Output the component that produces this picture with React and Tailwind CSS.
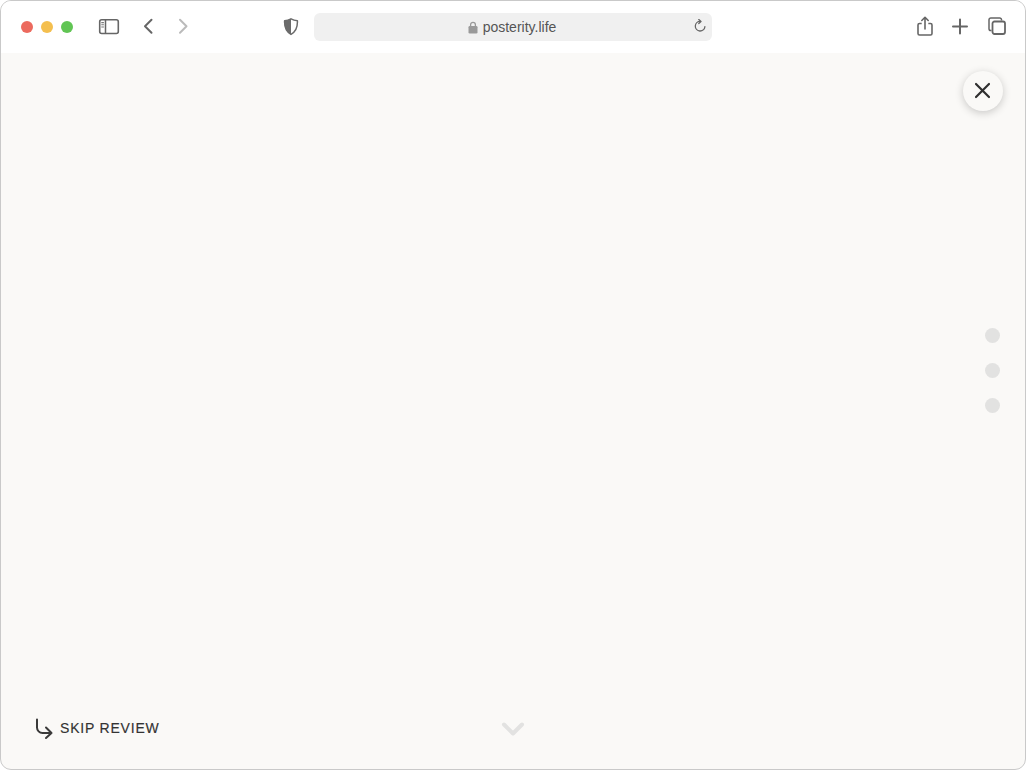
const Toolbar = () => (
  <div className="h-[52px] shrink-0 bg-white flex items-center">
    {/* traffic lights */}
    <div className="flex gap-2 ml-5">
      <span className="w-3 h-3 rounded-full bg-[#ec6a5e]" />
      <span className="w-3 h-3 rounded-full bg-[#f4bf4f]" />
      <span className="w-3 h-3 rounded-full bg-[#61c554]" />
    </div>

    {/* sidebar */}
    <svg className="ml-[25px]" width="22" height="18" viewBox="0 0 22 18" fill="none">
      <rect x="1.700" y="1.800" width="18.600" height="13.700" rx="2" stroke="#666" strokeWidth="1.600" />
      <path d="M7.500 1.800v13.700" stroke="#666" strokeWidth="1.500" />
      <path d="M3.300 4.600h2.600M3.300 6.800h2.600M3.300 9h2.600" stroke="#777" strokeWidth="1.100" />
    </svg>

    {/* back / forward */}
    <svg className="ml-[22px]" width="12" height="18" viewBox="0 0 12 18" fill="none">
      <path d="M9.500 1.800 3 8.300l6.500 6.500" stroke="#666" strokeWidth="2" strokeLinecap="round" strokeLinejoin="round" />
    </svg>
    <svg className="ml-[23px]" width="12" height="18" viewBox="0 0 12 18" fill="none">
      <path d="M3 1.800l6.500 6.500L3 14.800" stroke="#bbb" strokeWidth="2" strokeLinecap="round" strokeLinejoin="round" />
    </svg>

    {/* shield */}
    <svg className="ml-[94px]" width="16" height="18" viewBox="0 0 16 18" fill="none">
      <path d="M8 .800c2 1.100 4 1.700 6.400 1.900.3 5.800-1.400 10.900-6.400 13.700C3 13.600 1.300 8.500 1.600 2.700 4 2.500 6 1.900 8 .800Z" stroke="#6b6b6b" strokeWidth="1.500" strokeLinejoin="round" />
      <path d="M8 .800c-2 1.100-4 1.700-6.400 1.900C1.300 8.500 3 13.600 8 16.400V.800Z" fill="#6b6b6b" />
    </svg>

    {/* address bar */}
    <div className="ml-[15px] w-[398px] h-7 pr-[2px] rounded-md bg-[#f0f0f0] flex items-center justify-center relative font-['Liberation_Sans',sans-serif] text-[14px] text-[#555]">
      <svg className="mr-[5px]" width="10" height="13" viewBox="0 0 10 13" fill="none">
        <path d="M2.600 5.500V3.700a2.400 2.400 0 0 1 4.800 0v1.800" stroke="#999" strokeWidth="1.300" />
        <rect x="0.500" y="5" width="9" height="7.500" rx="1.300" fill="#999" />
      </svg>
      <span>posterity.life</span>
      <svg className="absolute right-[5px] top-[6px]" width="14" height="14" viewBox="0 0 14 14" fill="none">
        <path d="M7.200 2.400a4.800 4.800 0 1 0 4.700 5.200" stroke="#666" strokeWidth="1.300" strokeLinecap="round" />
        <path d="M5.800.500 8 2.500 5.800 4.500" stroke="#666" strokeWidth="1.300" strokeLinecap="round" strokeLinejoin="round" />
      </svg>
    </div>

    {/* right side */}
    <svg className="ml-[204px]" width="18" height="22" viewBox="0 0 18 22" fill="none">
      <path d="M5.700 7.500H3.500A1.500 1.500 0 0 0 2 9v8.500A1.500 1.500 0 0 0 3.500 19h11a1.500 1.500 0 0 0 1.500-1.500V9a1.500 1.500 0 0 0-1.500-1.500h-2.200" stroke="#666" strokeWidth="1.600" />
      <path d="M9 13V1.500M5.800 4.500 9 1.300l3.200 3.200" stroke="#666" strokeWidth="1.600" strokeLinecap="round" strokeLinejoin="round" />
    </svg>
    <svg className="ml-[17px]" width="18" height="18" viewBox="0 0 18 18" fill="none">
      <path d="M9 1.500v14M2 8.500h14" stroke="#666" strokeWidth="2" strokeLinecap="round" />
    </svg>
    <svg className="ml-[18px]" width="20" height="20" viewBox="0 0 20 20" fill="none">
      <path d="M4.500 13.500h-.7A1.800 1.800 0 0 1 2 11.700V2.800A1.800 1.800 0 0 1 3.800 1h8.900a1.800 1.800 0 0 1 1.800 1.800v.7" stroke="#666" strokeWidth="1.500" />
      <rect x="5.500" y="4.500" width="12.500" height="12.500" rx="2" stroke="#666" strokeWidth="1.800" />
    </svg>
  </div>
);

const App = () => {
  return (
    <div className="w-[1026px] h-[770px] bg-white overflow-hidden">
      <div className="h-full flex flex-col rounded-[11px] border border-[#c9c9c9] overflow-hidden bg-[#faf9f7]">
        <Toolbar />

        <main className="relative flex-1 flex flex-col justify-end">
          {/* close */}
          <button className="absolute top-[18px] right-[22px] w-10 h-10 rounded-full bg-[#faf9f7] shadow-[0_2px_8px_rgba(0,0,0,0.2)] flex items-center justify-center">
            <svg width="18" height="18" viewBox="0 0 18 18" fill="none">
              <path d="M2 2l13 13M15 2 2 15" stroke="#2f2f2f" strokeWidth="2.200" strokeLinecap="round" />
            </svg>
          </button>

          {/* section dots */}
          <div className="absolute top-[275px] right-[25px] flex flex-col gap-5">
            <span className="w-[15px] h-[15px] rounded-full bg-[#e2e2e1]" />
            <span className="w-[15px] h-[15px] rounded-full bg-[#e2e2e1]" />
            <span className="w-[15px] h-[15px] rounded-full bg-[#e2e2e1]" />
          </div>

          {/* bottom row */}
          <div className="relative h-[30px] mb-[26px] flex items-center">
            <div className="ml-8 flex items-center text-[#333] font-['Liberation_Sans',sans-serif] text-[14px] tracking-[0.8px] [-webkit-text-stroke:0.15px_#333]">
              <svg width="20" height="24" viewBox="0 0 20 24" fill="none">
                <path d="M4 3.500v8A5.500 5.500 0 0 0 9.500 17H18.500M13 11.500l5.500 5.500-5.500 5" stroke="#3a3a3a" strokeWidth="2" strokeLinecap="round" strokeLinejoin="round" />
              </svg>
              <span className="ml-[7px]">SKIP REVIEW</span>
            </div>
            <svg className="absolute left-[499px] top-[8px]" width="26" height="16" viewBox="0 0 26 16" fill="none">
              <path d="M4 3.500 13 12.500 22 3.500" stroke="#e2e2e1" strokeWidth="4" strokeLinecap="round" strokeLinejoin="round" />
            </svg>
          </div>
        </main>
      </div>
    </div>
  );
};

export default App;
